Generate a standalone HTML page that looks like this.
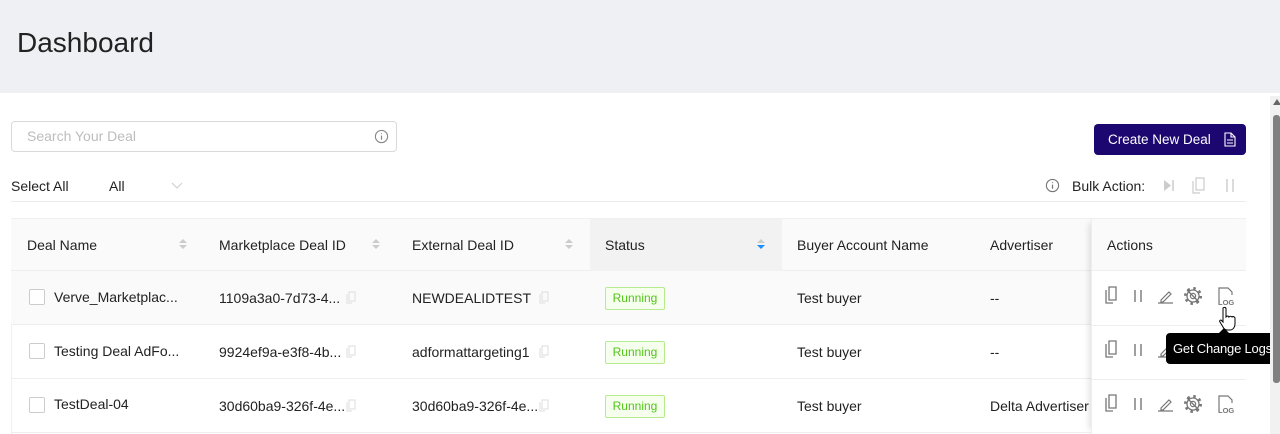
<!DOCTYPE html>
<html><head><meta charset="utf-8">
<style>
*{box-sizing:border-box;margin:0;padding:0}
body{width:1280px;height:434px;overflow:hidden;background:#fff;font-family:"Liberation Sans",Arial,sans-serif;position:relative;color:#222}
.a{position:absolute}
.top{left:0;top:0;width:1280px;height:93px;background:#eff0f4}
.title{left:17px;top:27px;font-size:28px;color:#222}
.search{left:11px;top:121px;width:386px;height:31px;border:1px solid #d9d9d9;border-radius:4px}
.search span{position:absolute;left:15px;top:6px;font-size:14px;color:#bdbdbd}
.btn{left:1094px;top:124px;width:152px;height:31px;background:#1c0670;border-radius:4px;color:#fff;font-size:13.5px;line-height:31px;padding-left:14px;white-space:nowrap}
.t14{font-size:14px}
.hr{height:1px;background:#ececec}
.tbl{left:11px;top:218px;width:1235px;height:216px;border:1px solid #f0f0f0;border-bottom:none}
.hdr{left:11px;top:219px;width:1235px;height:52px;background:#fafafa;border-bottom:1px solid #eee}
.row{left:11px;width:1235px;height:54px;border-bottom:1px solid #eee}
.cell{font-size:14px;color:#222}
.cb{width:16px;height:16px;border:1px solid #ccc;border-radius:2px;background:#fff}
.tag{width:60px;height:23px;border:1px solid #b7eb8f;background:#f6ffed;color:#52c41a;font-size:12px;line-height:21px;text-align:center;border-radius:2px}
.act{left:1091px;top:219px;width:155px;height:215px;background:#fff;box-shadow:-6px 0 6px -4px rgba(0,0,0,.12);border-left:1px solid #eee}
</style></head><body>
<div class="a top"></div>
<div class="a title">Dashboard</div>
<div class="a search"><span>Search Your Deal</span>
<svg class="a" style="left:362px;top:7px" width="15" height="15" viewBox="0 0 16 16"><circle cx="8" cy="8" r="6.5" fill="none" stroke="#888" stroke-width="1.2"/><path d="M8 7v4.5M8 4.5v1" stroke="#888" stroke-width="1.3"/></svg></div>
<div class="a btn">Create New Deal</div>
<svg class="a" style="left:1224px;top:132px" width="12" height="15" viewBox="0 0 12 15"><path d="M1 1h6l4 4v9H1z M7 1v4h4 M3 8h6 M3 11h6" fill="none" stroke="#fff" stroke-width="1.1"/></svg>
<div class="a t14" style="left:11px;top:178px">Select All</div>
<div class="a t14" style="left:109px;top:178px">All</div>
<svg class="a" style="left:171px;top:182px" width="12" height="8"><path d="M1 1l5 5 5-5" fill="none" stroke="#ccc"/></svg>
<svg class="a" style="left:1045px;top:178px" width="15" height="15" viewBox="0 0 16 16"><circle cx="8" cy="8" r="6.5" fill="none" stroke="#777" stroke-width="1.2"/><path d="M8 7v4.5M8 4.5v1" stroke="#777" stroke-width="1.3"/></svg>
<div class="a t14" style="left:1072px;top:178px">Bulk Action:</div>
<svg class="a" style="left:1163px;top:179px" width="12" height="13"><path d="M1 1l7 5.5-7 5.5z" fill="#ccc"/><path d="M10 1v11" stroke="#ccc" stroke-width="1.5"/></svg>
<svg class="a" style="left:1192px;top:177px" width="16" height="17"><path d="M4 1h8v12H4z" fill="none" stroke="#ccc" stroke-width="1.2"/><path d="M1 4v12h7" fill="none" stroke="#ccc" stroke-width="1.2"/></svg>
<svg class="a" style="left:1225px;top:179px" width="10" height="13"><path d="M2 0v13M8 0v13" stroke="#ccc" stroke-width="1.4"/></svg>
<div class="a hr" style="left:11px;top:201px;width:1235px"></div>
<div class="a tbl"></div>
<div class="a hdr"></div>
<div class="a" style="left:590px;top:219px;width:192px;height:52px;background:#f2f2f2"></div>
<div class="a cell" style="left:27px;top:237px">Deal Name</div>
<div class="a cell" style="left:219px;top:237px">Marketplace Deal ID</div>
<div class="a cell" style="left:412px;top:237px">External Deal ID</div>
<div class="a cell" style="left:605px;top:237px">Status</div>
<div class="a cell" style="left:797px;top:237px">Buyer Account Name</div>
<div class="a cell" style="left:990px;top:237px">Advertiser</div>
<svg class="a" style="left:179px;top:238px" width="8" height="12"><path d="M0 5l4-4 4 4z" fill="#ccc"/><path d="M0 7l4 4 4-4z" fill="#ccc"/></svg>
<svg class="a" style="left:372px;top:238px" width="8" height="12"><path d="M0 5l4-4 4 4z" fill="#ccc"/><path d="M0 7l4 4 4-4z" fill="#ccc"/></svg>
<svg class="a" style="left:565px;top:238px" width="8" height="12"><path d="M0 5l4-4 4 4z" fill="#ccc"/><path d="M0 7l4 4 4-4z" fill="#ccc"/></svg>
<svg class="a" style="left:757px;top:238px" width="8" height="12"><path d="M0 5l4-4 4 4z" fill="#ccc"/><path d="M0 7l4 4 4-4z" fill="#1890ff"/></svg>

<div class="a row" style="top:271px;background:#fafafa"></div>
<div class="a row" style="top:325px"></div>
<div class="a row" style="top:379px"></div>

<div class="a cb" style="left:29px;top:289px"></div>
<div class="a cell" style="left:54px;top:289px">Verve_Marketplac...</div>
<div class="a cell" style="left:219px;top:290px">1109a3a0-7d73-4...</div>
<div class="a cell" style="left:412px;top:290px">NEWDEALIDTEST</div>
<div class="a tag" style="left:605px;top:287px">Running</div>
<div class="a cell" style="left:797px;top:290px">Test buyer</div>
<div class="a cell" style="left:990px;top:290px">--</div>

<div class="a cb" style="left:29px;top:343px"></div>
<div class="a cell" style="left:54px;top:343px">Testing Deal AdFo...</div>
<div class="a cell" style="left:219px;top:344px">9924ef9a-e3f8-4b...</div>
<div class="a cell" style="left:412px;top:344px">adformattargeting1</div>
<div class="a tag" style="left:605px;top:341px">Running</div>
<div class="a cell" style="left:797px;top:344px">Test buyer</div>
<div class="a cell" style="left:990px;top:344px">--</div>

<div class="a cb" style="left:29px;top:397px"></div>
<div class="a cell" style="left:54px;top:396px">TestDeal-04</div>
<div class="a cell" style="left:219px;top:398px">30d60ba9-326f-4e...</div>
<div class="a cell" style="left:412px;top:398px">30d60ba9-326f-4e...</div>
<div class="a tag" style="left:605px;top:395px">Running</div>
<div class="a cell" style="left:797px;top:398px">Test buyer</div>
<div class="a cell" style="left:990px;top:398px">Delta Advertiser</div>

<svg class="a" style="left:346px;top:291px" width="10" height="13"><path d="M3 1h6v9H3zM1 3v9h5" fill="none" stroke="#ddd"/></svg>
<svg class="a" style="left:539px;top:291px" width="10" height="13"><path d="M3 1h6v9H3zM1 3v9h5" fill="none" stroke="#ddd"/></svg>
<svg class="a" style="left:346px;top:345px" width="10" height="13"><path d="M3 1h6v9H3zM1 3v9h5" fill="none" stroke="#ddd"/></svg>
<svg class="a" style="left:539px;top:345px" width="10" height="13"><path d="M3 1h6v9H3zM1 3v9h5" fill="none" stroke="#ddd"/></svg>
<svg class="a" style="left:346px;top:399px" width="10" height="13"><path d="M3 1h6v9H3zM1 3v9h5" fill="none" stroke="#ddd"/></svg>
<svg class="a" style="left:539px;top:399px" width="10" height="13"><path d="M3 1h6v9H3zM1 3v9h5" fill="none" stroke="#ddd"/></svg>

<div class="a act"></div>
<div class="a" style="left:1091px;top:219px;width:155px;height:52px;background:#fafafa;border-bottom:1px solid #eee;border-left:1px solid #eee"></div>
<div class="a cell" style="left:1107px;top:237px">Actions</div>
<div class="a" style="left:1091px;top:325px;width:155px;height:1px;background:#eee"></div>
<div class="a" style="left:1091px;top:379px;width:155px;height:1px;background:#eee"></div>

<svg width="0" height="0" style="position:absolute"><defs>
<g id="acts">
<path d="M5 1h7v13H5z" fill="none" stroke="#777" stroke-width="1.3"/><path d="M2 4v13h7" fill="none" stroke="#777" stroke-width="1.3"/>
<path d="M31 4v12M37 4v12" stroke="#777" stroke-width="1.4"/>
<path d="M54 17h15M57 14l8-8 2 2-8 8h-2z" fill="none" stroke="#777" stroke-width="1.2"/>
<g transform="translate(89,10)" fill="none" stroke="#777"><circle r="6" stroke-width="1.3"/><circle r="7.5" stroke-width="3" stroke-dasharray="2.4 3.5"/><circle r="2.6" stroke-width="1.2"/><path d="M-6-6l12 12" stroke-width="1.3"/></g>
<path d="M115 18V2h9l4 4v3" fill="none" stroke="#777" stroke-width="1.2"/>
<text x="114" y="19" font-family="Liberation Sans,sans-serif" font-size="7.5" font-weight="bold" fill="#777">LOG</text>
</g></defs></svg>
<svg class="a" style="left:1104px;top:286px" width="135" height="22"><use href="#acts"/></svg>
<svg class="a" style="left:1104px;top:340px" width="135" height="22"><use href="#acts"/></svg>
<svg class="a" style="left:1104px;top:394px" width="135" height="22"><use href="#acts"/></svg>

<svg class="a" style="left:1218px;top:306px" width="20" height="26"><path d="M5 2c1-1 3-1 3 1v8l1-1c1 0 2 0 2 1 1-1 2-1 3 0 1-1 3 0 3 1v6c0 3-2 6-5 6h-3c-2 0-3-1-4-3l-3-5c-1-1 0-2 1-2l2 2V3z" fill="#fff" stroke="#000" stroke-width="1"/></svg>

<div class="a" style="left:1166px;top:333px;width:114px;height:31px;background:#000;border-radius:4px;color:#fff;font-size:13px;letter-spacing:-0.2px;line-height:31px;padding-left:7px;white-space:nowrap;overflow:hidden">Get Change Logs</div>
<div class="a" style="left:1218px;top:328px;width:0;height:0;border-left:6px solid transparent;border-right:6px solid transparent;border-bottom:6px solid #000"></div>

<div class="a" style="left:1270px;top:96px;width:10px;height:338px;background:#f1f1f1"></div>
<div class="a" style="left:1273px;top:99px;width:0;height:0;border-left:4px solid transparent;border-right:4px solid transparent;border-bottom:6px solid #666"></div>
<div class="a" style="left:1273px;top:115px;width:7px;height:268px;background:#808080;border-radius:3px"></div>
</body></html>
